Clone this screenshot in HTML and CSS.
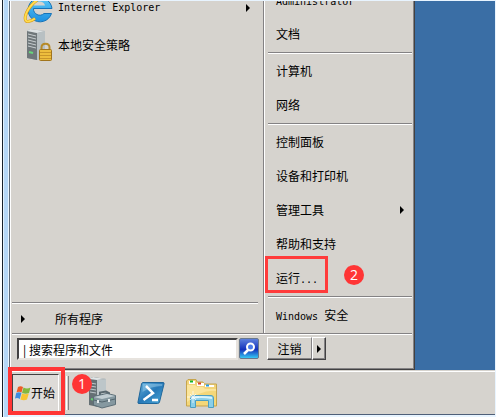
FILE: index.html
```html
<!DOCTYPE html>
<html lang="zh-CN">
<head>
<meta charset="utf-8">
<title>开始菜单</title>
<link rel="stylesheet" href="styles.css">
</head>
<body>
<div class="window">
  <div class="session">
    <main class="desktop">
      <nav class="menu">
        <div class="columns">
          <div class="programs">
            <a class="program" href="#">
              <svg width="32" height="32" viewBox="0 0 32 32" aria-hidden="true">
                <defs><linearGradient id="ie" x1="0" y1="0" x2="0" y2="1"><stop offset="0" stop-color="#5cc8f6"/><stop offset="1" stop-color="#1d8fe0"/></linearGradient></defs>
                <path d="M28.500 21.500A12 12 0 1 1 29 16.500H10.500C10 22 17 25.500 21 21.500Z" fill="url(#ie)" stroke="#1773b8"/>
                <path d="M10.500 13.500C12 8 21 8 22 13.500Z" fill="#d6d3ce"/>
                <path d="M28 5C26 0 13 7 7 15C1 23 1 30 5 29.500C7 29.300 10 28 12 26.500" fill="none" stroke="#d99b12" stroke-width="3"/>
                <path d="M28 5C26 0 13 7 7 15C1 23 1 30 5 29.500C7 29.300 10 28 12 26.500" fill="none" stroke="#ffdc50" stroke-width="2"/>
              </svg>
              <span class="latin">Internet Explorer</span>
              <svg class="arrow" width="5" height="8" viewBox="0 0 5 8" aria-hidden="true"><path d="M0 0L4 4L0 8Z"/></svg>
            </a>
            <a class="program" href="#">
              <svg width="32" height="32" viewBox="0 0 32 32" aria-hidden="true">
                <path d="M4 2L7 0L22 2V27L14 31L4 29Z" fill="#8d9699"/>
                <path d="M4 2L14 4V31L4 29Z" fill="#6f777a"/>
                <path d="M14 4L22 2V27L14 31Z" fill="#b8c0c3"/>
                <path d="M4 2L7 0L22 2L14 4Z" fill="#dde2e3"/>
                <path d="M5 5L13 7M5 8L13 10M5 11L13 13M5 14L13 16M5 17L13 19" stroke="#c7ced0"/>
                <path d="M6 23L10 24" stroke="#66d67b" stroke-width="2"/>
                <path d="M18.500 21V18.500C18.500 13.500 26.500 13.500 26.500 18.500V21" fill="none" stroke="#b68a28" stroke-width="2"/>
                <rect x="16.500" y="20.500" width="12" height="11" rx="1" fill="#edbd3d" stroke="#a1751d"/>
                <path d="M17 23.500H28M17 26.500H28M17 29.500H28" stroke="#c8952a"/>
              </svg>
              <span>本地安全策略</span>
            </a>
            <div class="all">
              <div class="rule"></div>
              <a class="all-programs" href="#">
                <svg width="5" height="8" viewBox="0 0 5 8" aria-hidden="true"><path d="M0 0L4 4L0 8Z"/></svg>
                <span>所有程序</span>
              </a>
            </div>
          </div>
          <div class="places">
            <a class="place first" href="#"><span class="latin">Administrator</span></a>
            <a class="place" href="#">文档</a>
            <div class="rule"></div>
            <a class="place" href="#">计算机</a>
            <a class="place" href="#">网络</a>
            <div class="rule"></div>
            <a class="place" href="#">控制面板</a>
            <a class="place" href="#">设备和打印机</a>
            <a class="place branch" href="#">管理工具<svg class="arrow" width="5" height="8" viewBox="0 0 5 8" aria-hidden="true"><path d="M0 0L4 4L0 8Z"/></svg></a>
            <a class="place" href="#">帮助和支持</a>
            <a class="place marked" href="#">运行<span class="latin">...</span><span class="badge badge-run">2</span></a>
            <div class="rule"></div>
            <a class="place" href="#"><span class="latin">Windows </span>安全</a>
          </div>
        </div>
        <form class="footer">
          <input class="search" type="text" aria-label="搜索程序和文件" value="| 搜索程序和文件">
          <button class="find" type="button" aria-label="搜索">
            <svg width="14" height="14" viewBox="0 0 14 14" aria-hidden="true"><circle cx="8.500" cy="5" r="3.500" fill="#4d7ce8" stroke="#fff" stroke-width="2"/><path d="M6 8L2 12" stroke="#fff" stroke-width="2.500"/></svg>
          </button>
          <button class="raised logoff" type="button">注销</button>
          <button class="raised more" type="button" aria-label="更多">
            <svg width="5" height="8" viewBox="0 0 5 8" aria-hidden="true"><path d="M0 0L4 4L0 8Z"/></svg>
          </button>
        </form>
      </nav>
    </main>
    <footer class="taskbar">
      <button class="start" type="button">
        <svg width="16" height="16" viewBox="0 0 16 16" aria-hidden="true">
          <path d="M3 2Q5.500 .5 8 2L6.500 7.500Q4 6 1.500 7.500Z" fill="#ee5b25"/>
          <path d="M8.500 2.500Q12 4.500 15.500 2.500L14 8Q11 9.500 7 8Z" fill="#83b83d"/>
          <path d="M1.200 8Q4 6.500 6.400 8L4.800 14Q2.500 12.500 0 13.500Z" fill="#3e8ce0"/>
          <path d="M7 8.500Q10 10 13.800 8.500L12 14.500Q9 16 5.400 14.500Z" fill="#f8c530"/>
        </svg>开始
      </button>
      <div class="grip"></div>
      <div class="apps">
        <button class="app" type="button" aria-label="服务器管理器">
          <svg width="32" height="32" viewBox="0 0 32 32" aria-hidden="true">
            <path d="M4 2L8 0L21 2V27L13 30L4 28Z" fill="#657074"/>
            <path d="M12 3L21 2V27L12 30Z" fill="#bdc6c9"/>
            <path d="M4 2L8 0L21 2L12 3Z" fill="#e1e5e6"/>
            <path d="M5 6L11 7M5 9L11 10M5 12L11 13M5 15L11 16" stroke="#bec7ca"/>
            <path d="M6 22L10 23" stroke="#67cf70" stroke-width="2"/>
            <path d="M15 18V15.500L21 14.500L24 16V18" fill="none" stroke="#59676e" stroke-width="2"/>
            <path d="M8.500 19.500L22 16.500L30.500 18.500V27.500L17 31L8.500 28Z" fill="#8598a0" stroke="#5c6e77"/>
            <path d="M9 20L22 17L30 19L17 22Z" fill="#c2ced3"/>
            <path d="M9 23L17 25L30 22" fill="none" stroke="#52646d"/>
            <path d="M13 23V26M24 22V25" stroke="#e4eaec" stroke-width="2"/>
          </svg>
        </button>
        <button class="app" type="button" aria-label="PowerShell">
          <svg width="32" height="32" viewBox="0 0 32 32" aria-hidden="true">
            <defs><linearGradient id="ps" x1="0" y1="0" x2="1" y2="1"><stop offset="0" stop-color="#69b4df"/><stop offset=".5" stop-color="#2779b8"/><stop offset="1" stop-color="#4ba8d7"/></linearGradient></defs>
            <path d="M8 5.500H28Q29.500 5.500 29 7L24.500 25Q24 26.500 22.500 26.500H4Q2.500 26.500 3 25L6.500 7Q7 5.500 8 5.500Z" fill="url(#ps)" stroke="#20679b"/>
            <path d="M8 7H27.500L27 9Q16 9 7.500 15Z" fill="#9dd0eb" opacity=".5"/>
            <path d="M11 9L18 16L8.500 23M17 23H23" fill="none" stroke="#fff" stroke-width="2.500"/>
          </svg>
        </button>
        <button class="app" type="button" aria-label="资源管理器">
          <svg width="34" height="32" viewBox="0 0 34 32" aria-hidden="true">
            <path d="M1.500 29V4L3 2.500H11L12 5H18L19 7H31.500V29Z" fill="#f2d47a" stroke="#c6a44d"/>
            <path d="M4 4H10V7H4ZM12 6H19V9H12ZM20 8H29V10H20Z" fill="#fff"/>
            <path d="M5 4.500H8" stroke="#16b52a" stroke-width="2"/><path d="M13 6.500H16" stroke="#d8432b" stroke-width="2"/><path d="M21 8.500H24" stroke="#249be8" stroke-width="2"/>
            <path d="M2 8H10L12 10H18L20 12H31V28H2Z" fill="#fbe59c"/>
            <path d="M2 25Q17 12 31 14V28H2Z" fill="#f4d779"/>
            <path d="M5.500 30.500V21Q5.500 18.500 8 18.500H26Q28.500 18.500 28.500 21V30.500H23.500V23.500H10.500V30.500Z" fill="#8acfe8" stroke="#4b9ec1"/>
            <path d="M7 21Q16 19 27 21" fill="none" stroke="#d6f3fc" stroke-width="2"/>
            <path d="M8 14V26M2 20H14M5 17L11 23M11 17L5 23" stroke="#fff" opacity=".7"/>
          </svg>
        </button>
      </div>
      <span class="badge badge-start">1</span>
    </footer>
  </div>
</div>
</body>
</html>
```
FILE: styles.css
```css
* { box-sizing: border-box; }

body {
  margin: 0;
  font: 12px/16px "Noto Sans CJK SC", sans-serif;
  color: #000;
}

a { color: inherit; text-decoration: none; }
svg { flex: none; display: block; }
button, input { font: inherit; color: inherit; margin: 0; padding: 0; }
.latin { font-family: "DejaVu Sans Mono", monospace; font-size: 10px; }

.window {
  min-height: 100vh;
  display: flex;
  padding: 1px 1px 2px 2px;
  background: linear-gradient(90deg, #fff 2px, #17202b 2px 3px, #e4f3ff 3px 4px, #b5d7f7 4px 8px, #e8f4ff 8px);
}
.session {
  flex: 1;
  display: flex;
  flex-direction: column;
  margin-left: 7px;
  border-left: 1px solid #5d6b7a;
  border-bottom: 1px solid #4f5f78;
  background: #d6d3ce;
}
.desktop {
  flex: 1;
  display: flex;
  align-items: flex-end;
  background: #3a6ea5;
}

.menu {
  width: 405px;
  background: #d6d3ce;
  border: solid #424142;
  border-width: 0 1px 1px 0;
  box-shadow: inset -1px -1px #848284, inset 1px 0 #fff;
}
.columns { display: flex; padding: 0 2px; overflow: hidden; }
.programs {
  flex: 1;
  display: flex;
  flex-direction: column;
  padding-right: 5px;
}
.program {
  display: flex;
  align-items: center;
  gap: 3px;
  height: 37px;
  padding: 0 7px 0 11px;
}
.program:first-child { margin-top: -12px; }
.arrow { margin-left: auto; }
.all { margin-top: auto; }
.all-programs {
  display: flex;
  align-items: center;
  gap: 29px;
  height: 29px;
  padding-left: 9px;
}
.rule {
  height: 2px;
  margin-top: 1px;
  border-top: 1px solid #848284;
  border-bottom: 1px solid #fff;
}

.places {
  width: 149px;
  padding: 0 0 1px 4px;
  border-left: 1px solid #848284;
  box-shadow: inset 1px 0 #fff;
}
.place {
  display: block;
  height: 34px;
  padding: 0 7px 0 8px;
  line-height: 34px;
  white-space: nowrap;
}
.place.first { margin-top: -18px; }
.branch { display: flex; align-items: center; }
.marked { position: relative; }
.marked::before {
  content: "";
  position: absolute;
  inset: -5px 84px 2px -3px;
  border: 3px solid #ff3b3b;
}

.footer {
  display: flex;
  align-items: flex-start;
  margin: 0 2px;
  padding: 3px 0 9px 5px;
  border-top: 1px solid #848284;
  box-shadow: inset 0 1px #fff;
}
.search {
  width: 221px;
  height: 22px;
  margin-top: 1px;
  padding: 0 4px;
  background: #fff;
  border: 2px solid;
  border-color: #424142 #e7e3de #e7e3de #424142;
  border-radius: 0;
  outline: 0;
}
.find {
  width: 20px;
  height: 21px;
  margin: 1px 8px 0 1px;
  display: grid;
  place-items: center;
  border: 1px solid #68788d;
  border-radius: 2px;
  background: linear-gradient(#5d80dc, #1431bc 55%, #36c7f3);
}
.raised {
  height: 23px;
  background: #d6d3ce;
  border: 1px solid;
  border-color: #fff #424142 #424142 #fff;
  box-shadow: inset -1px -1px #848284;
}
.logoff { width: 45px; border-right-color: #848284; box-shadow: inset 0 -1px #848284; }
.more { width: 14px; padding-left: 4px; }

.taskbar {
  position: relative;
  display: flex;
  align-items: center;
  height: 44px;
  border-top: 1px solid #d6d3ce;
  box-shadow: inset 0 1px #fff;
}
.start {
  position: relative;
  display: flex;
  align-items: center;
  width: 47px;
  height: 38px;
  margin-left: 2px;
  padding-left: 2px;
  border: 1px solid;
  border-color: #424142 #fff #fff #424142;
  background: #dedbd8;
  white-space: nowrap;
}
.start::before {
  content: "";
  position: absolute;
  inset: -8px -7px -4px -5px;
  border: 4px solid #ff3535;
}
.grip {
  width: 3px;
  height: 34px;
  margin-left: 7px;
  border-left: 1px solid #fff;
  border-right: 1px solid #848284;
}
.apps { display: flex; gap: 18px; margin-left: 16px; }
.app { border: 0; background: none; }

.badge {
  position: absolute;
  display: grid;
  place-items: center;
  width: 20px;
  height: 20px;
  border-radius: 50%;
  background: #ff3535;
  color: #fff;
  font: 14px/20px "Open Sans", sans-serif;
}
.badge-run { left: 76px; top: 4px; }
.badge-start { left: 62px; top: 3px; }
```
